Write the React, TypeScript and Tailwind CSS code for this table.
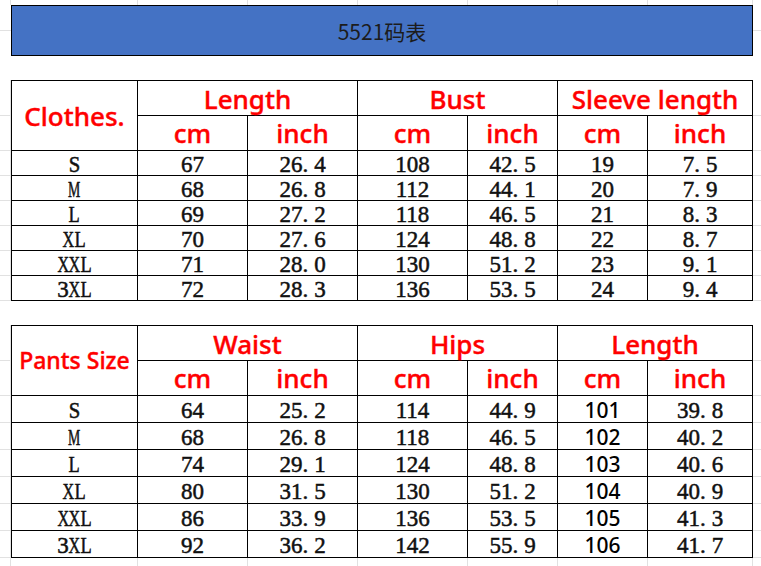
import clsx from "clsx";
import type { ReactNode } from "react";

const cols = "grid grid-cols-[11px_127px_110px_110px_110px_90px_90px_105px_1fr]";
const grid = "border-[#e1e1e1]";

const clothes = [
  ["S", "67", "26.4", "108", "42.5", "19", "7.5"],
  ["M", "68", "26.8", "112", "44.1", "20", "7.9"],
  ["L", "69", "27.2", "118", "46.5", "21", "8.3"],
  ["XL", "70", "27.6", "124", "48.8", "22", "8.7"],
  ["XXL", "71", "28.0", "130", "51.2", "23", "9.1"],
  ["3XL", "72", "28.3", "136", "53.5", "24", "9.4"],
];

const pants = [
  ["S", "64", "25.2", "114", "44.9", "101", "39.8"],
  ["M", "68", "26.8", "118", "46.5", "102", "40.2"],
  ["L", "74", "29.1", "124", "48.8", "103", "40.6"],
  ["XL", "80", "31.5", "130", "51.2", "104", "40.9"],
  ["XXL", "86", "33.9", "136", "53.5", "105", "41.3"],
  ["3XL", "92", "36.2", "142", "55.9", "106", "41.7"],
];

// narrow the latin letters so they sit in half-width cells like SimSun
const squeeze: Record<string, string> = {
  S: "scale-x-90",
  M: "scale-x-60",
  L: "scale-x-80",
  X: "scale-x-70",
  "3": "",
};

const serif = "font-['Liberation_Serif',serif] text-[23px] leading-none text-[#111] pt-[3px] [-webkit-text-stroke:0.5px_#111]";

function Cell({ children, className }: { children?: ReactNode; className?: string }) {
  return (
    <div className={clsx("flex items-center justify-center border-r border-b border-black", className)}>
      {children}
    </div>
  );
}

function Margin({ right }: { right?: boolean }) {
  return <div className={clsx("border-b", grid, !right && "border-r")} />;
}

function Head({ children, size = "text-[26px]" }: { children: ReactNode; size?: string }) {
  return (
    <span
      className={clsx(
        "font-['Noto_Sans','Noto_Sans_CJK_SC',sans-serif] font-medium leading-none text-[#ff0000] [-webkit-text-stroke:0.4px_#ff0000]",
        size
      )}
    >
      {children}
    </span>
  );
}

function Num({ v }: { v: string }) {
  const [a, b] = v.split(".");
  return (
    <span className={serif}>
      {a}
      {b !== undefined && (
        <>
          .<span className="inline-block w-[6px]" />
          {b}
        </>
      )}
    </span>
  );
}

function SizeLabel({ v }: { v: string }) {
  return (
    <span className={clsx("flex", serif)}>
      {v.split("").map((c, i) => (
        <span key={i} className="flex justify-center w-[11.5px]">
          <span className={clsx("inline-block", squeeze[c])}>{c}</span>
        </span>
      ))}
    </span>
  );
}

function SizeTable({
  title,
  titleSize,
  groups,
  rows,
  rowsClass,
  sansCol,
}: {
  title: string;
  titleSize: string;
  groups: string[];
  rows: string[][];
  rowsClass: string;
  sansCol?: number;
}) {
  return (
    <div className={clsx(cols, rowsClass)}>
      <Margin />
      <Cell className="row-span-2 border-l border-t">
        <Head size={titleSize}>{title}</Head>
      </Cell>
      {groups.map((g) => (
        <Cell key={g} className="col-span-2 border-t pt-[2px]">
          <Head>{g}</Head>
        </Cell>
      ))}
      <Margin right />

      <Margin />
      {groups.map((g) => (
        <div key={g} className="contents">
          <Cell>
            <Head>cm</Head>
          </Cell>
          <Cell>
            <Head>inch</Head>
          </Cell>
        </div>
      ))}
      <Margin right />

      {rows.map((r) => (
        <div key={r[0]} className="contents">
          <Margin />
          <Cell className="border-l">
            <SizeLabel v={r[0]} />
          </Cell>
          {r.slice(1).map((v, i) =>
            i + 1 === sansCol ? (
              <Cell key={i}>
                <span className="font-['Noto_Sans',sans-serif] font-medium text-[21px] leading-none text-black pt-[3px]">
                  {v}
                </span>
              </Cell>
            ) : (
              <Cell key={i}>
                <Num v={v} />
              </Cell>
            )
          )}
          <Margin right />
        </div>
      ))}
    </div>
  );
}

function Strip({ h }: { h: string }) {
  return (
    <div className={clsx(cols, h)}>
      {Array.from({ length: 8 }).map((_, i) => (
        <div key={i} className={clsx("border-r", grid)} />
      ))}
      <div />
    </div>
  );
}

export default function App() {
  return (
    <div className="w-[761px] h-[566px] bg-white overflow-hidden">
      <Strip h="h-[5px]" />

      {/* title bar */}
      <div className="flex h-[51px]">
        <div className="w-[11px] flex flex-col">
          <div className={clsx("h-[26px] border-b", grid)} />
        </div>
        <div className="w-[742px] bg-[#4472c4] border border-black flex items-center justify-center">
          <span className="font-['Noto_Sans_CJK_SC',sans-serif] text-[21px] text-[#1c1c1c] pt-[3px]">5521码表</span>
        </div>
        <div className="flex-1 flex flex-col">
          <div className={clsx("h-[26px] border-b", grid)} />
        </div>
      </div>

      <div className="h-[24px]" />

      <SizeTable
        title="Clothes."
        titleSize="text-[26px]"
        groups={["Length", "Bust", "Sleeve length"]}
        rows={clothes}
        rowsClass="grid-rows-[36px_35px_repeat(6,25px)]"
      />

      <div className="h-[24px]" />

      <SizeTable
        title="Pants Size"
        titleSize="text-[23px]"
        groups={["Waist", "Hips", "Length"]}
        rows={pants}
        rowsClass="grid-rows-[36px_35px_repeat(6,27px)]"
        sansCol={5}
      />

      <Strip h="h-[9px]" />
    </div>
  );
}
